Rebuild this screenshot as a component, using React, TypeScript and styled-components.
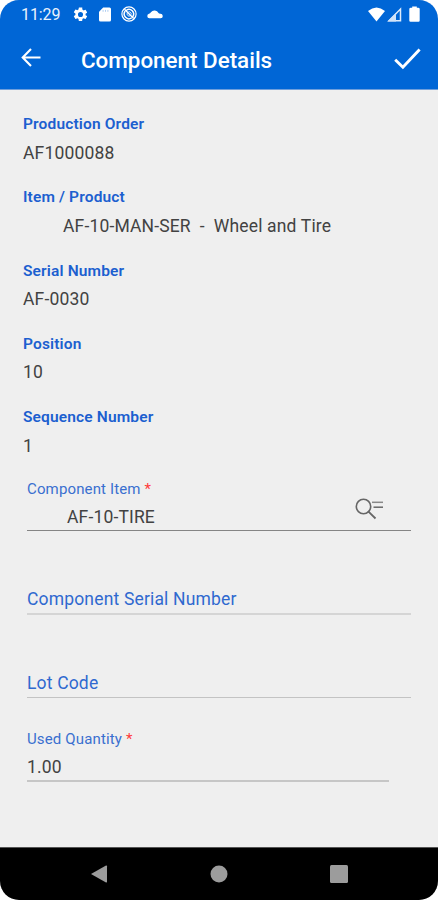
import React from 'react';
import styled, { createGlobalStyle } from 'styled-components';

const GlobalStyle = createGlobalStyle`
  * { box-sizing: border-box; }
  html, body { margin: 0; padding: 0; background: #fff; }
  body { font-family: Roboto, "Liberation Sans", sans-serif; }
  svg { display: block; }
`;

const Screen = styled.div`
  width: 438px;
  height: 900px;
  display: flex;
  flex-direction: column;
  overflow: hidden;
  border-radius: 19px;
  background: #efefef;
`;

const Header = styled.header`
  height: 90px;
  background: #0066d6;
  border-bottom: 1px solid #6f9fdc;
  color: #fff;
`;

const StatusBar = styled.div`
  height: 28px;
  padding: 0 18px 0 21px;
  display: flex;
  align-items: center;
  justify-content: space-between;
`;

const StatusGroup = styled.div<{ $gap: number }>`
  display: flex;
  align-items: center;
  gap: ${(p) => p.$gap}px;
`;

const Clock = styled.span`
  font-size: 16px;
  line-height: 28px;
  width: 43px;
  padding-top: 1px;
  letter-spacing: -0.1px;
  color: #e9f2fd;
`;

const AppBar = styled.div`
  height: 61px;
  display: flex;
  align-items: center;
  padding: 2px 17px 0 21px;
`;

const Title = styled.h1`
  flex: 1;
  margin: 1px 0 0 40px;
  font-size: 22.4px;
  line-height: 30px;
  font-weight: 500;
  white-space: nowrap;
`;

const IconButton = styled.button<{ $lift?: number }>`
  border: 0;
  padding: 0 0 ${(p) => p.$lift ?? 0}px;
  background: none;
  color: inherit;
`;

const Content = styled.main`
  flex: 1;
  padding: 22px 23px 0;
`;

const Detail = styled.section`
  height: 73.3px;
`;

const DetailLabel = styled.div`
  font-size: 15.5px;
  line-height: 24px;
  font-weight: 600;
  letter-spacing: 0.15px;
  color: #1c5fd0;
`;

const Value = styled.div<{ $indent?: boolean }>`
  padding-left: ${(p) => (p.$indent ? 40 : 0)}px;
  font-size: 17.5px;
  line-height: 24px;
  letter-spacing: 0.16px;
  color: #424242;
  white-space: pre;
`;

const DetailValue = styled(Value)`
  margin-top: 4.5px;
`;

const Form = styled.div`
  padding: 0.5px 4px 0;
`;

const Field = styled.div<{ $height: number; $line: string; $short?: boolean; $thick?: boolean }>`
  height: ${(p) => p.$height}px;
  width: ${(p) => (p.$short ? 362 : 384)}px;
  display: flex;
  flex-direction: column;
  justify-content: flex-end;
  border-bottom: ${(p) => (p.$thick ? 2 : 1)}px solid ${(p) => p.$line};
`;

const FieldLabel = styled.label`
  font-size: 15px;
  line-height: 20px;
  letter-spacing: 0.14px;
  color: #3a6fd0;
`;

const Required = styled.span`
  color: #ff3b3b;
`;

const FieldRow = styled.div<{ $height: number }>`
  display: flex;
  justify-content: space-between;
  align-items: flex-start;
  height: ${(p) => p.$height}px;
  padding-right: 28px;
`;

const FieldValue = styled(Value)<{ $top: number }>`
  margin-top: ${(p) => p.$top}px;
`;

const LookupButton = styled.button`
  margin-top: -1px;
  padding: 0;
  border: 0;
  background: none;
`;

const Placeholder = styled.div`
  font-size: 17.5px;
  line-height: 28px;
  letter-spacing: 0.17px;
  color: #2f69cf;
`;

const NavBar = styled.nav`
  height: 53px;
  flex: none;
  background: #000;
  border-top: 1px solid #555;
  display: grid;
  grid-template-columns: 18px 18px 18px;
  column-gap: 101.5px;
  justify-content: center;
  align-items: center;
  color: #9c9c9c;
`;

const details = [
  { label: 'Production Order', value: 'AF1000088' },
  { label: 'Item / Product', value: 'AF-10-MAN-SER  -  Wheel and Tire', indent: true },
  { label: 'Serial Number', value: 'AF-0030' },
  { label: 'Position', value: '10' },
  { label: 'Sequence Number', value: '1' },
];

const Gear = () => (
  <svg width="17" height="17" viewBox="0 0 24 24" fill="currentColor">
    <path d="M19.14 12.94c.04-.3.06-.61.06-.94s-.02-.64-.07-.94l2.03-1.58a.49.49 0 0 0 .12-.61l-1.92-3.32a.49.49 0 0 0-.59-.22l-2.39.96a7 7 0 0 0-1.62-.94l-.36-2.54A.48.48 0 0 0 13.92 2h-3.84a.48.48 0 0 0-.48.41l-.36 2.54c-.59.24-1.13.57-1.62.94l-2.39-.96a.49.49 0 0 0-.59.22L2.72 8.47a.48.48 0 0 0 .12.61l2.03 1.58c-.05.3-.09.63-.09.94s.02.64.07.94l-2.03 1.58a.49.49 0 0 0-.12.61l1.92 3.32c.12.22.37.29.59.22l2.39-.96c.5.38 1.03.7 1.62.94l.36 2.54c.05.24.24.41.48.41h3.84c.24 0 .44-.17.47-.41l.36-2.54a7 7 0 0 0 1.62-.94l2.39.96c.22.08.47 0 .59-.22l1.92-3.32a.48.48 0 0 0-.12-.61zM12 15.6a3.6 3.6 0 1 1 0-7.2 3.6 3.6 0 0 1 0 7.2z" />
  </svg>
);

const SdCard = () => (
  <svg width="12" height="15" viewBox="0 0 12 15" fill="currentColor">
    <path d="M4.2.5H10.500q1.500 0 1.500 1.500v11q0 1.500-1.500 1.500h-9Q0 14.500 0 13V4.700z" />
    <path d="M4.100 2.900v1.900M6.500 2.900v1.900M8.900 2.900v1.900" stroke="#8db9ec" strokeWidth=".7" />
  </svg>
);

const Blocked = () => (
  <svg width="16" height="16" viewBox="0 0 16 16" fill="none" stroke="currentColor">
    <circle cx="8" cy="8" r="7.100" strokeWidth="1.200" />
    <path d="M4.100 5.300a4.700 4.700 0 0 0 6.500 6.600M5.500 4.100a4.700 4.700 0 0 1 6.400 6.500M3.500 3.200l9.200 9.400" strokeWidth="1.500" />
    <path d="M6.200 7.200a2.200 2.200 0 0 0 2.700 2.800M7.400 5.900a2.200 2.200 0 0 1 2.700 2.700" strokeWidth="1" />
  </svg>
);

const Cloud = () => (
  <svg width="16" height="10" viewBox="0 0 16 10" fill="currentColor">
    <path d="M2.300 9.300A2.300 2.300 0 0 1 2 4.800Q3.200 4.500 3.900 3.200A4.500 4.500 0 0 1 11.500 4q.5.700 1.600.7a2.300 2.300 0 0 1 .6 4.600z" />
  </svg>
);

const Wifi = () => (
  <svg width="17" height="15" viewBox="0 0 17 15" fill="currentColor">
    <path d="M0 4Q8.500-3 17 4L8.500 14.500z" />
  </svg>
);

const Signal = () => (
  <svg width="15" height="15" viewBox="0 0 15 15">
    <path d="M2 13.700H13.500V2z" fill="none" stroke="#deebfb" strokeWidth="1.500" />
    <path d="M.5 14.500L9 6v8.500z" fill="#cfe2f9" />
  </svg>
);

const Battery = () => (
  <svg width="11" height="16" viewBox="0 0 11 16" fill="currentColor">
    <path d="M3.200 0.500h4.600v1.300h1.400Q10.700 1.800 10.700 3v11.500q0 1.200-1.200 1.200h-8Q.3 15.700.3 14.500V3q0-1.200 1.500-1.200h1.400z" />
  </svg>
);

const BackArrow = () => (
  <svg width="20" height="19" viewBox="0 0 20 19" fill="none" stroke="currentColor" strokeWidth="2.100">
    <path d="M10 1L1.700 9.500 10 18M1.700 9.500H19.500" />
  </svg>
);

const Check = () => (
  <svg width="27" height="22" viewBox="0 0 27 22" fill="none" stroke="currentColor" strokeWidth="2.900">
    <path d="M1.200 11.800l7.700 7.500L25.600 1.500" />
  </svg>
);

const SearchList = () => (
  <svg width="28" height="22" viewBox="0 0 28 22" fill="none" stroke="#666">
    <circle cx="8.500" cy="8.500" r="7.200" strokeWidth="1.600" />
    <path d="M13 13.200l7.500 7.300" strokeWidth="1.800" />
    <path d="M17 4.300h11" stroke="#888" strokeWidth="1.500" />
    <path d="M18.500 9.200H28" strokeWidth="1.500" />
  </svg>
);

export default function App() {
  return (
    <>
      <GlobalStyle />
      <Screen>
        <Header>
          <StatusBar>
            <StatusGroup $gap={8}>
              <Clock>11:29</Clock>
              <StatusGroup $gap={10}>
                <Gear />
                <SdCard />
                <Blocked />
                <Cloud />
              </StatusGroup>
            </StatusGroup>
            <StatusGroup $gap={7}>
              <StatusGroup $gap={2}>
                <Wifi />
                <Signal />
              </StatusGroup>
              <Battery />
            </StatusGroup>
          </StatusBar>
          <AppBar>
            <IconButton aria-label="Back" $lift={4}><BackArrow /></IconButton>
            <Title>Component Details</Title>
            <IconButton aria-label="Confirm" $lift={2}><Check /></IconButton>
          </AppBar>
        </Header>
        <Content>
          {details.map((d) => (
            <Detail key={d.label}>
              <DetailLabel>{d.label}</DetailLabel>
              <DetailValue $indent={d.indent}>{d.value}</DetailValue>
            </Detail>
          ))}
          <Form>
            <Field $height={52} $line="#858585">
              <FieldLabel>Component Item <Required>*</Required></FieldLabel>
              <FieldRow $height={33}>
                <FieldValue $indent $top={6}>AF-10-TIRE</FieldValue>
                <LookupButton aria-label="Look up component"><SearchList /></LookupButton>
              </FieldRow>
            </Field>
            <Field $height={84} $line="#d5d5d5" $thick>
              <Placeholder>Component Serial Number</Placeholder>
            </Field>
            <Field $height={83} $line="#c3c3c3">
              <Placeholder>Lot Code</Placeholder>
            </Field>
            <Field $height={84} $line="#c6c6c6" $short $thick>
              <FieldLabel>Used Quantity <Required>*</Required></FieldLabel>
              <FieldRow $height={31}>
                <FieldValue $top={6}>1.00</FieldValue>
              </FieldRow>
            </Field>
          </Form>
        </Content>
        <NavBar>
          <svg width="18" height="18" viewBox="0 0 18 18" fill="currentColor">
            <path d="M0 9L15 .5q1-.3 1 .7v15.600q0 1-1 .7z" />
          </svg>
          <svg width="18" height="18" viewBox="0 0 18 18" fill="currentColor">
            <circle cx="9" cy="9" r="8.500" />
          </svg>
          <svg width="18" height="18" viewBox="0 0 18 18" fill="currentColor">
            <rect width="18" height="18" rx="1.500" />
          </svg>
        </NavBar>
      </Screen>
    </>
  );
}
